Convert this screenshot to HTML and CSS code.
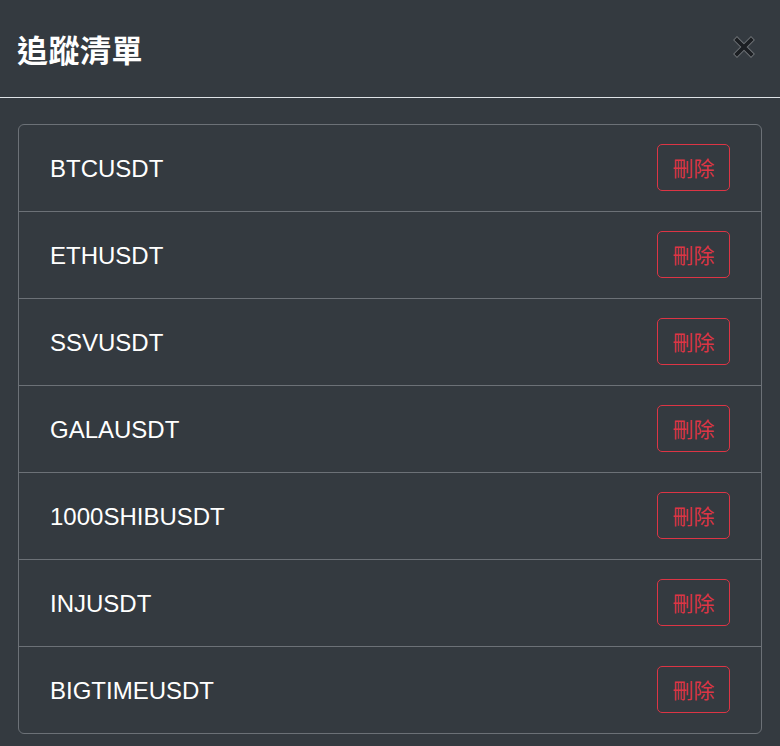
FILE: index.html
```html
<!DOCTYPE html>
<html lang="zh-Hant">
<head>
<meta charset="utf-8">
<title>追蹤清單</title>
<link rel="stylesheet" href="styles.css">
</head>
<body>
<div class="modal">
  <div class="modal-header">
    <h5 class="modal-title">追蹤清單</h5>
    <button class="btn-close" aria-label="Close">
      <svg width="22" height="22" viewBox="0 0 22 22">
        <path d="M4 4 L18 18 M18 4 L4 18" stroke="rgba(255,255,255,0.3)" stroke-width="5.5" stroke-linecap="square"/>
        <path d="M4 4 L18 18 M18 4 L4 18" stroke="#1c1f23" stroke-width="3.8" stroke-linecap="square"/>
      </svg>
    </button>
  </div>
  <div class="modal-body">
    <ul class="list-group">
      <li class="list-item"><span class="symbol">BTCUSDT</span><button class="btn-delete">刪除</button></li>
      <li class="list-item"><span class="symbol">ETHUSDT</span><button class="btn-delete">刪除</button></li>
      <li class="list-item"><span class="symbol">SSVUSDT</span><button class="btn-delete">刪除</button></li>
      <li class="list-item"><span class="symbol">GALAUSDT</span><button class="btn-delete">刪除</button></li>
      <li class="list-item"><span class="symbol">1000SHIBUSDT</span><button class="btn-delete">刪除</button></li>
      <li class="list-item"><span class="symbol">INJUSDT</span><button class="btn-delete">刪除</button></li>
      <li class="list-item"><span class="symbol">BIGTIMEUSDT</span><button class="btn-delete">刪除</button></li>
    </ul>
  </div>
</div>
</body>
</html>
```
FILE: styles.css
```css
* { box-sizing: border-box; }
html, body {
  margin: 0;
  padding: 0;
  background: #343a40;
  height: 100%;
  overflow: hidden;
}
body {
  font-family: "Liberation Sans", Arial, "Noto Sans CJK TC", sans-serif;
  color: #fff;
}
.modal-header {
  display: flex;
  align-items: center;
  justify-content: space-between;
  height: 98px;
  padding: 0 17px;
  border-bottom: 1px solid #dee2e6;
}
.modal-title {
  margin: 0;
  font-family: "Noto Sans CJK TC", sans-serif;
  font-size: 31px;
  font-weight: 700;
  line-height: 47px;
  letter-spacing: 0.5px;
  color: #fff;
}
.btn-close {
  border: 0;
  background: transparent;
  padding: 0;
  margin-right: 8px;
  margin-top: -4px;
  width: 22px;
  height: 22px;
  display: flex;
  align-items: center;
  justify-content: center;
  cursor: pointer;
}
.modal-body {
  padding: 26px 18px 12px;
}
.list-group {
  list-style: none;
  margin: 0;
  padding: 0;
  border: 1px solid #6c7177;
  border-radius: 6px;
}
.list-item {
  display: flex;
  align-items: flex-start;
  justify-content: space-between;
  padding: 19px 31px 20px;
  border-top: 1px solid #6c7177;
}
.list-item:first-child {
  border-top: 0;
}
.symbol {
  font-size: 24px;
  line-height: 24px;
  margin-top: 13px;
  color: #fff;
}
.btn-delete {
  font-family: "Noto Sans CJK TC", sans-serif;
  font-size: 21px;
  line-height: 33px;
  height: 47px;
  width: 73px;
  padding: 6px 0;
  color: #dc3545;
  background: transparent;
  border: 1px solid #dc3545;
  border-radius: 5px;
  text-align: center;
  cursor: pointer;
}
```
